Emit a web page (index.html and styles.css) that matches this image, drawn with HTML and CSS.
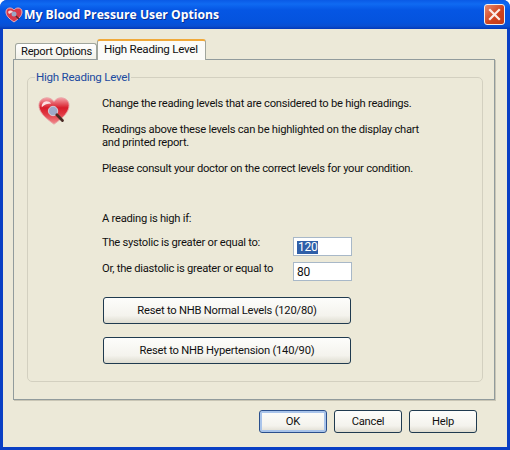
FILE: index.html
```html
<!DOCTYPE html>
<html lang="en">
<head>
  <meta charset="UTF-8">
  <title>My Blood Pressure User Options</title>
  <link rel="stylesheet" href="styles.css">
</head>
<body>
  <div class="window">
    <div class="titlebar">
      <svg class="title-icon" width="18" height="16" viewBox="0 0 18 16">
        <path d="M9 15 C3 11 1 8 1 5 C1 2 3 1 5 1 C7 1 8 2 9 3 C10 2 11 1 13 1 C15 1 17 2 17 5 C17 8 15 11 9 15Z" fill="#d8384a" stroke="#eeb0b6"/>
        <path d="M3 5 C4 3 7 3 8 5 L4 7Z" fill="#f7d5d8"/>
        <circle cx="9" cy="7" r="2.5" fill="#9aa7c4"/>
        <path d="M11 9 L14 12" stroke="#5a2a2a" stroke-width="1.5"/>
      </svg>
      <div class="title">My Blood Pressure User Options</div>
      <div class="close">
        <svg width="13" height="13" viewBox="0 0 13 13">
          <path d="M2 2 L11 11 M11 2 L2 11" stroke="#fbeee6" stroke-width="2.2" stroke-linecap="square"/>
        </svg>
      </div>
    </div>
    <div class="client">
      <div class="tabs">
        <div class="tab">Report Options</div>
        <div class="tab tab-active">High Reading Level</div>
      </div>
      <div class="pane">
        <fieldset class="group">
          <legend>High Reading Level</legend>
          <div class="group-body">
            <svg class="heart" width="32" height="30" viewBox="0 0 34 30">
              <defs>
                <linearGradient id="heartfill" x1="0" y1="0" x2="0" y2="1">
                  <stop offset="0" stop-color="#f4a3a8"/>
                  <stop offset="0.38" stop-color="#d81c2a"/>
                  <stop offset="0.6" stop-color="#e03540"/>
                  <stop offset="1" stop-color="#f08d90"/>
                </linearGradient>
              </defs>
              <path d="M17 29 C7 22 1 16 1 9 C1 4 5 1 9.500 1 C13 1 15.500 3 17 5 C18.500 3 21 1 24.500 1 C29 1 33 4 33 9 C33 16 27 22 17 29Z" fill="url(#heartfill)" stroke="#e9a3a6"/>
              <path d="M4 9 C5 4 11 3 14 7 C10 7 7 8 4 11Z" fill="#fbdfe0"/>
              <circle cx="16" cy="15" r="5" fill="#9fa9c9" stroke="#d5d3dc"/>
              <path d="M20 19 L26 25" stroke="#4a2b25" stroke-width="3" stroke-linecap="round"/>
            </svg>
            <div class="content">
              <p class="intro">Change the reading levels that are considered to be high readings.</p>
              <p class="para">Readings above these levels can be highlighted on the display chart and printed report.</p>
              <p class="para">Please consult your doctor on the correct levels for your condition.</p>
              <p class="high-if">A reading is high if:</p>
              <div class="field-row">
                <span>The systolic is greater or equal to:</span>
                <div class="field"><span class="selected">120</span></div>
              </div>
              <div class="field-row">
                <span class="label-low">Or, the diastolic is greater or equal to</span>
                <div class="field">80</div>
              </div>
              <div class="reset-buttons">
                <button class="btn btn-wide">Reset to NHB Normal Levels (120/80)</button>
                <button class="btn btn-wide">Reset to NHB Hypertension (140/90)</button>
              </div>
            </div>
          </div>
        </fieldset>
      </div>
      <div class="footer">
        <button class="btn btn-default">OK</button>
        <button class="btn">Cancel</button>
        <button class="btn">Help</button>
      </div>
    </div>
  </div>
</body>
</html>
```

FILE: styles.css
```css
* {
  box-sizing: border-box;
  margin: 0;
  padding: 0;
}
html, body {
  width: 510px;
  height: 450px;
  overflow: hidden;
  background-color: #fff;
}
body {
  font-family: Roboto, "Liberation Sans", sans-serif;
  font-size: 11.2px;
  letter-spacing: -0.26px;
  color: #111;
}
.window {
  width: 510px;
  height: 450px;
  display: flex;
  flex-direction: column;
  background-color: #0a3fc4;
  border-radius: 7px 7px 0 0;
  overflow: hidden;
}
.titlebar {
  height: 29px;
  flex: none;
  display: flex;
  align-items: center;
  padding: 0 5px 0 5px;
  background: linear-gradient(#0a5ae6 0, #0f6af2 4px, #0556e4 10px, #0453de 22px, #0a4fd2 26px, #0339b8 29px);
}
.title-icon {
  margin-right: 1px;
}
.title {
  flex: 1;
  font-family: "Open Sans", sans-serif;
  font-weight: bold;
  font-size: 12.2px;
  letter-spacing: 0;
  color: #fff;
  text-shadow: 1px 1px 0 #0a2f90;
}
.close {
  width: 21px;
  height: 21px;
  display: flex;
  align-items: center;
  justify-content: center;
  background: linear-gradient(135deg, #e58a70, #d0441f 55%, #c23a18);
  border: 1px solid #f2f0ee;
  border-radius: 3px;
}
.client {
  flex: 1;
  margin: 0 3px 3px;
  background-color: #ece9d8;
  padding: 11px 12px 0 10px;
  display: flex;
  flex-direction: column;
}
.tabs {
  display: flex;
  align-items: flex-end;
  height: 19px;
  padding-left: 2px;
  position: relative;
  z-index: 1;
}
.tab {
  height: 16px;
  padding: 1px 0 0 5px;
  width: 82px;
  white-space: nowrap;
  background: linear-gradient(#fff, #f2f1e8);
  border: 1px solid #a0a59c;
  border-bottom: none;
  border-radius: 3px 3px 0 0;
}
.tab-active {
  height: 21px;
  width: 109px;
  margin-bottom: -1px;
  padding: 1px 0 0 6px;
  font-size: 11.6px;
  background: #fbfbf8;
  border-top: 2px solid #f0a93a;
}
.pane {
  height: 341px;
  flex: none;
  border: 1px solid #919b9c;
  background-color: #ece9d8;
  padding: 10px 11px 17px 13px;
  box-shadow: 1px 1px 0 #c9c6b6;
}
.group {
  height: 100%;
  border: 1px solid #d3d0c0;
  border-radius: 5px;
  padding: 0 10px 0 10px;
}
.group legend {
  margin-left: -3px;
  padding: 0 1px;
  color: #1c4ba0;
  font-size: 11.6px;
  line-height: 15px;
}
.group-body {
  display: flex;
  padding-top: 9px;
}
.heart {
  flex: none;
  margin-top: 2px;
  margin-right: 32px;
}
.content {
  width: 335px;
  line-height: 13px;
}
.intro {
  margin-top: 3px;
}
.para {
  margin-top: 13px;
}
.high-if {
  margin-top: 37px;
}
.field-row {
  display: flex;
  align-items: flex-start;
  justify-content: space-between;
  width: 250px;
  height: 20px;
  margin-top: 5px;
}
.field-row:first-of-type {
  margin-top: 11px;
}
.label-low {
  padding-top: 1px;
}
.field {
  width: 59px;
  height: 19px;
  margin-top: 1px;
  padding: 3px 2px 0 3px;
  background-color: #fff;
  border: 1px solid #a8b8c8;
  font-size: 12px;
}
.selected {
  display: inline-block;
  background-color: #2f5fa8;
  color: #fff;
  padding: 0 1px;
}
.reset-buttons {
  display: flex;
  flex-direction: column;
  gap: 13px;
  margin-top: 16px;
  padding-left: 1px;
}
.btn {
  width: 68px;
  height: 23px;
  font-family: inherit;
  font-size: 11.2px;
  letter-spacing: -0.22px;
  color: #111;
  background: linear-gradient(#fdfdfb, #f4f3ed 70%, #dedcd0);
  border: 1px solid #1f3a4f;
  border-radius: 3px;
}
.btn-wide {
  width: 248px;
  height: 27px;
}
.btn-default {
  border-color: #2a4f8c;
  box-shadow: inset 0 0 0 2px #a9c4ea;
}
.footer {
  display: flex;
  justify-content: flex-end;
  gap: 7px;
  padding: 10px 18px 0 0;
}
```
